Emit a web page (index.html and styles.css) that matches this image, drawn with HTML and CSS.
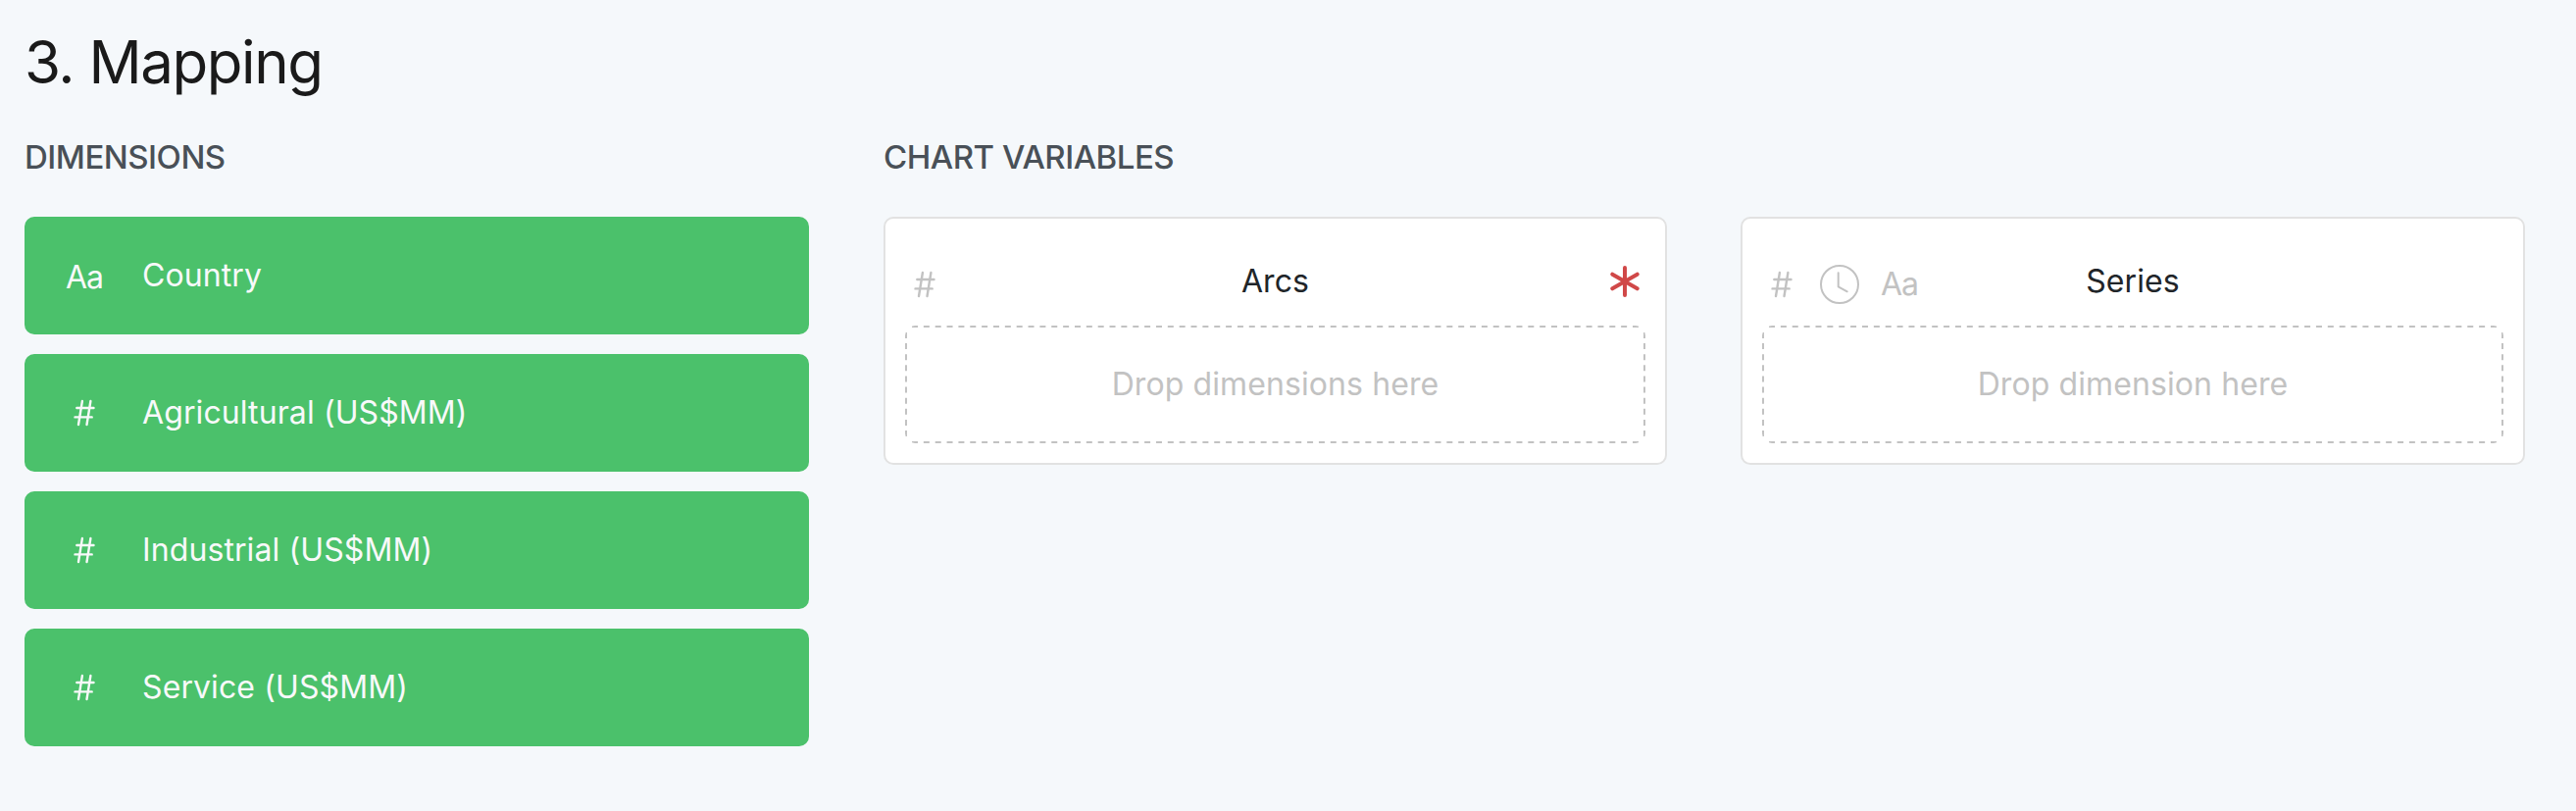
FILE: index.html
```html
<!DOCTYPE html>
<html lang="en">
<head>
<meta charset="utf-8">
<title>Mapping</title>
<link rel="stylesheet" href="styles.css">
</head>
<body>
<svg width="0" height="0" class="sprite" aria-hidden="true">
  <symbol id="hash" viewBox="0 0 22 28"><path d="M8.9 2 5 26M17.4 2l-3.9 24M3.3 9h17.2M1.5 18.4h17.2" fill="none" stroke="currentColor" stroke-width="2.4" stroke-linecap="round"/></symbol>
  <symbol id="dashes" viewBox="0 0 755 120" preserveAspectRatio="none">
    <path d="M7 1h741M7 119h741" fill="none" stroke="currentColor" stroke-width="2" stroke-dasharray="6 5.855"/>
    <path d="M1 7v106M754 7v106" fill="none" stroke="currentColor" stroke-width="2" stroke-dasharray="6 5.111"/>
  </symbol>
</svg>
<main class="mapping">
  <h2 class="title">3. Mapping</h2>
  <div class="columns">
    <section class="dimensions">
      <h5 class="subtitle">DIMENSIONS</h5>
      <div class="list">
        <div class="dimension"><span class="type letters">Aa</span><span>Country</span></div>
        <div class="dimension"><span class="type"><svg class="hash"><use href="#hash"/></svg></span><span>Agricultural (US$MM)</span></div>
        <div class="dimension"><span class="type"><svg class="hash"><use href="#hash"/></svg></span><span>Industrial (US$MM)</span></div>
        <div class="dimension"><span class="type"><svg class="hash"><use href="#hash"/></svg></span><span>Service (US$MM)</span></div>
      </div>
    </section>
    <section class="variables">
      <h5 class="subtitle">CHART VARIABLES</h5>
      <div class="cards">
        <div class="card">
          <div class="head">
            <div class="types"><svg class="hash"><use href="#hash"/></svg></div>
            <div>Arcs</div>
            <svg class="required" viewBox="0 0 30 32"><path d="M15 2v28M2.3 8.7l25.4 14.6M27.7 8.7 2.3 23.3" fill="none" stroke="currentColor" stroke-width="4" stroke-linecap="round"/></svg>
          </div>
          <div class="drop"><svg class="outline"><use href="#dashes"/></svg>Drop dimensions here</div>
        </div>
        <div class="card">
          <div class="head">
            <div class="types">
              <svg class="hash"><use href="#hash"/></svg>
              <svg class="clock" viewBox="0 0 40 40"><circle cx="20" cy="20" r="19"/><path d="M18.7 8.3v14l9 5"/></svg>
              <span class="letters">Aa</span>
            </div>
            <div>Series</div>
          </div>
          <div class="drop"><svg class="outline"><use href="#dashes"/></svg>Drop dimension here</div>
        </div>
      </div>
    </section>
  </div>
</main>
</body>
</html>
```
FILE: styles.css
```css
* { box-sizing: border-box; }
body {
  margin: 0;
  background: #f5f8fb;
  color: #212529;
  font: 400 32px/48px Inter, "Liberation Sans", sans-serif;
  letter-spacing: 0.1px;
}
.sprite { display: block; height: 0; }
.mapping { padding: 27px 52px 0 25px; }
.title {
  margin: 0;
  color: #1a1a1a;
  font-size: 60px;
  font-weight: 400;
  line-height: 72px;
  letter-spacing: -1.45px;
}
.columns { display: flex; gap: 76px; margin-top: 37px; }
.dimensions { width: 800px; }
.variables { flex: 1; }
.subtitle {
  margin: 0 0 37px;
  color: #495057;
  font-size: 33px;
  font-weight: 500;
  line-height: 48px;
  letter-spacing: -0.5px;
}
.list { display: grid; gap: 20px; }
.dimension {
  display: flex;
  align-items: center;
  height: 120px;
  padding-left: 41px;
  border-radius: 10px;
  background: #4bc16b;
  color: #f8f9fa;
}
.type { display: flex; justify-content: center; width: 40px; margin-right: 39px; }
.type.letters { padding-top: 3px; }
.hash { width: 22px; height: 28px; }
.letters { letter-spacing: -1px; }
.cards { display: grid; grid-template-columns: 799px 800px; gap: 75px; }
.card {
  height: 253px;
  padding: 37px 20px 20px;
  border: 2px solid #e2e2e2;
  border-radius: 10px;
  background: #fff;
}
.head {
  display: grid;
  grid-template-columns: 1fr auto 1fr;
  align-items: center;
  height: 54px;
  padding: 0 6px;
}
.types { display: flex; align-items: center; padding: 5px 0 0 3px; color: #c2c2c2; }
.clock {
  width: 40px;
  height: 40px;
  margin: 0 22px 0 28px;
  fill: none;
  stroke: currentColor;
  stroke-width: 2;
  stroke-linecap: round;
  stroke-linejoin: round;
}
.required { justify-self: end; width: 30px; height: 32px; color: #d04848; }
.drop {
  position: relative;
  display: flex;
  align-items: center;
  justify-content: center;
  height: 120px;
  margin-top: 18px;
  border-radius: 10px;
  color: #c2c2c2;
  overflow: hidden;
}
.outline { position: absolute; inset: 0; width: 100%; height: 100%; }
```
